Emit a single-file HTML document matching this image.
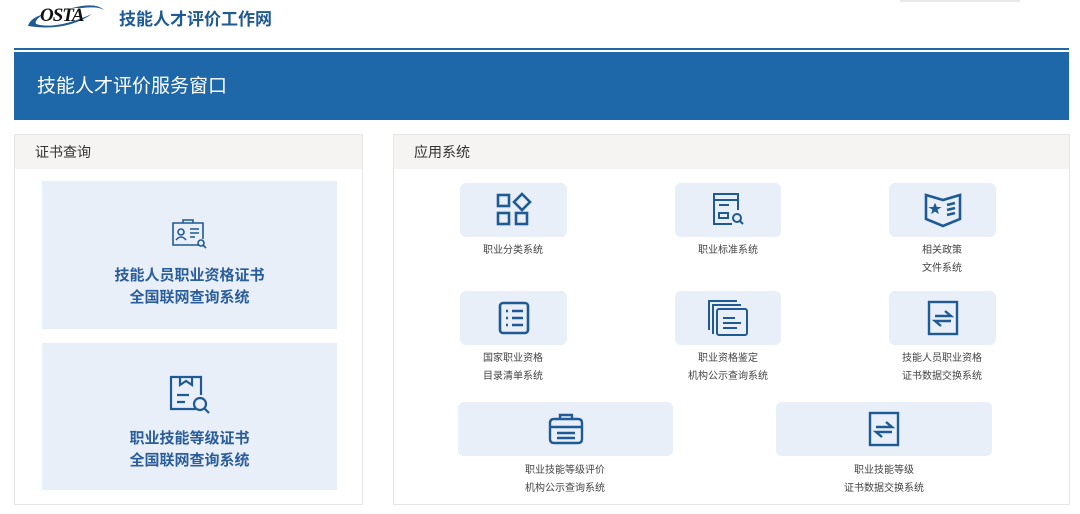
<!DOCTYPE html>
<html><head><meta charset="utf-8"><style>
*{margin:0;padding:0;box-sizing:border-box}
body{width:1080px;height:514px;background:#fff;position:relative;overflow:hidden;font-family:"Liberation Sans","Noto Sans CJK SC",sans-serif}
.a{position:absolute}
.panel{border:1px solid #e6e6e6;background:#fff}
.ph{position:absolute;left:0;top:0;right:0;height:34px;background:#f5f4f2;font-size:14px;color:#333;line-height:34px;padding-left:20px}
.card{position:absolute;background:#e8eff8;text-align:center;color:#2a5d9a;font-weight:bold;font-size:15px;line-height:22px}
.tile{position:absolute;background:#e8eff8;border-radius:6px;display:flex;align-items:center;justify-content:center}
.lb{position:absolute;font-size:10px;color:#444;text-align:center;line-height:18px;width:200px}
svg{fill:none;stroke:#1f5a94;stroke-width:2.2}
</style></head><body>
<div class="a" style="left:26px;top:2px;width:80px;height:30px">
<svg width="80" height="30" viewBox="0 0 80 30" style="stroke:none"><path d="M2 24 Q4 16 18 12 Q8 18 10 22 Q30 28 66 12 Q40 30 2 24Z" fill="#1f5a94"/><path d="M46 6 Q70 0 78 8 Q72 4 56 6Z" fill="#1f5a94"/></svg>
<span class="a" style="left:14px;top:3px;font:italic bold 19px 'Liberation Serif',serif;color:#111;letter-spacing:-1px">OSTA</span></div>
<div class="a" style="left:119px;top:5px;font-size:17px;font-weight:bold;color:#1f5a94">技能人才评价工作网</div>
<div class="a" style="left:900px;top:0;width:120px;height:2px;background:#e8e8e8"></div>
<div class="a" style="left:14px;top:48px;width:1055px;height:2px;background:#1e67a8"></div>
<div class="a" style="left:14px;top:52px;width:1055px;height:68px;background:#1e67a8;color:#fff;font-size:19px;line-height:70px;padding-left:23px">技能人才评价服务窗口</div>

<div class="a panel" style="left:14px;top:134px;width:349px;height:371px">
<div class="ph">证书查询</div>
<div class="card" style="left:27px;top:46px;width:295px;height:148px">
<svg class="a" style="left:127px;top:36px;stroke-width:1.6" width="40" height="34" viewBox="0 0 40 34"><path d="M14 6V3h10v3"/><path d="M34 22V6H4v22h26"/><circle cx="12" cy="15" r="3"/><path d="M7 23q5-6 10 0M21 12h9M21 16h9M21 20h5"/><circle cx="32" cy="26" r="3"/><path d="M34 28l3 3"/></svg>
<div class="a" style="left:0;right:0;top:84px">技能人员职业资格证书<br>全国联网查询系统</div></div>
<div class="card" style="left:27px;top:208px;width:295px;height:147px">
<svg class="a" style="left:126px;top:32px" width="44" height="42" viewBox="0 0 44 42"><path d="M28 34H3V2h30v18"/><path d="M12 2v8l6-4 6 4V2M9 20h12M9 27h8"/><circle cx="32" cy="29" r="6"/><path d="M36 33l5 5"/></svg>
<div class="a" style="left:0;right:0;top:85px">职业技能等级证书<br>全国联网查询系统</div></div>
</div>

<div class="a panel" style="left:393px;top:134px;width:677px;height:371px">
<div class="ph">应用系统</div></div>

<div class="tile" style="left:460px;top:183px;width:107px;height:54px"><svg width="38" height="36" viewBox="0 0 38 36" style="stroke-width:2.6"><rect x="3" y="3" width="11" height="11"/><path d="M27 2l8 8-8 8-8-8z"/><rect x="3" y="21" width="11" height="11"/><rect x="21" y="21" width="11" height="11"/></svg></div>
<div class="tile" style="left:675px;top:183px;width:106px;height:54px"><svg width="36" height="38" viewBox="0 0 36 38" style="stroke-width:2"><path d="M22 33H4V3h24v16M4 9h24M9 14h10M9 22h9v5H9z"/><circle cx="27" cy="27" r="4"/><path d="M30 30l3 3"/></svg></div>
<div class="tile" style="left:889px;top:183px;width:107px;height:54px"><svg width="40" height="38" viewBox="0 0 40 38" style="stroke-width:2.6"><path d="M3 4l17 5 17-5v24l-17 7-17-7z"/><path d="M24 14l8-2M24 19l8-2M24 24l8-2"/><path d="M12 13l1.5 3.5h3.5l-3 2 1 3.5-3-2-3 2 1-3.5-3-2h3.5z" fill="#1f5a94" stroke-width="1"/></svg></div>
<div class="lb" style="left:413px;top:242px">职业分类系统</div>
<div class="lb" style="left:628px;top:242px">职业标准系统</div>
<div class="lb" style="left:842px;top:242px">相关政策<br>文件系统</div>

<div class="tile" style="left:460px;top:291px;width:107px;height:54px"><svg width="34" height="36" viewBox="0 0 34 36" style="stroke-width:2.6"><rect x="3" y="3" width="28" height="30" rx="3"/><path d="M9 11h2M15 11h11M9 18h2M15 18h11M9 25h2M15 25h11"/></svg></div>
<div class="tile" style="left:675px;top:291px;width:106px;height:54px"><svg width="44" height="40" viewBox="0 0 44 40" style="stroke-width:2"><path d="M7 36V7h28"/><path d="M3 32V3h28"/><rect x="11" y="11" width="30" height="26" rx="2"/><path d="M17 20h12M17 25h18M17 30h14"/></svg></div>
<div class="tile" style="left:889px;top:291px;width:107px;height:54px"><svg width="34" height="38" viewBox="0 0 34 38" style="stroke-width:2.4"><rect x="3" y="3" width="28" height="32"/><path d="M9 17h16l-6-5M25 22H9l6 5"/></svg></div>
<div class="lb" style="left:413px;top:350px">国家职业资格<br>目录清单系统</div>
<div class="lb" style="left:628px;top:350px">职业资格鉴定<br>机构公示查询系统</div>
<div class="lb" style="left:842px;top:350px">技能人员职业资格<br>证书数据交换系统</div>

<div class="tile" style="left:458px;top:402px;width:215px;height:54px"><svg width="40" height="36" viewBox="0 0 40 36" style="stroke-width:2.4"><path d="M14 8V4h12v4"/><path d="M4 12q0-4 4-4h24q4 0 4 4v16q0 4-4 4H8q-4 0-4-4z"/><path d="M4 16h32M11 22h18M11 27h18"/></svg></div>
<div class="tile" style="left:776px;top:402px;width:216px;height:54px"><svg width="34" height="38" viewBox="0 0 34 38" style="stroke-width:2.4"><rect x="3" y="3" width="28" height="32"/><path d="M9 17h16l-6-5M25 22H9l6 5"/></svg></div>
<div class="lb" style="left:465px;top:462px">职业技能等级评价<br>机构公示查询系统</div>
<div class="lb" style="left:784px;top:462px">职业技能等级<br>证书数据交换系统</div>
</body></html>
